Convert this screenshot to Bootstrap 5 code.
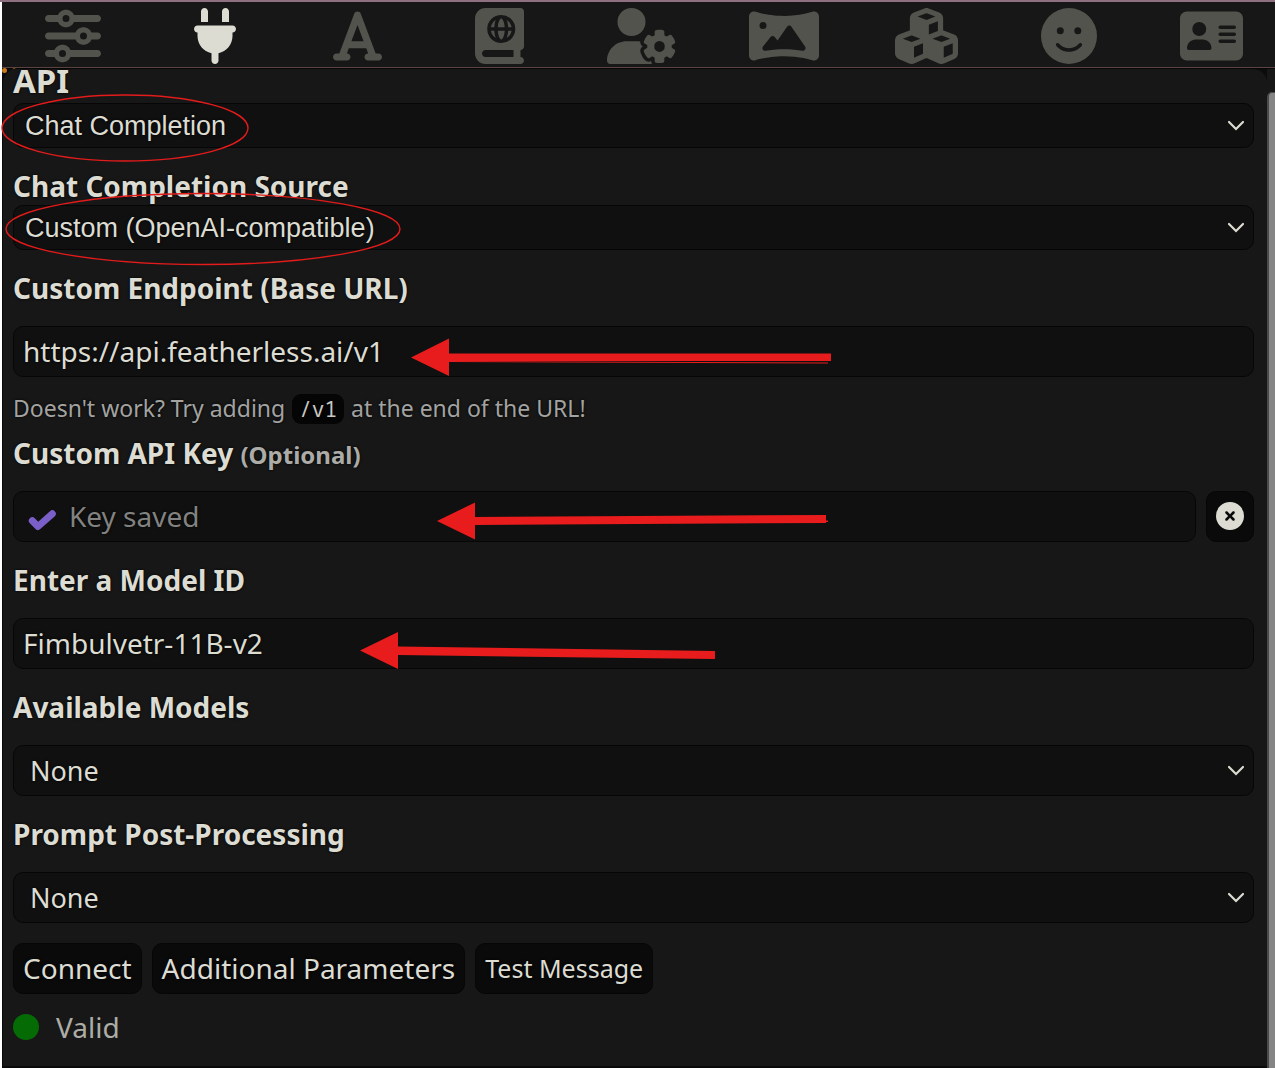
<!DOCTYPE html>
<html lang="en">
<head>
<meta charset="utf-8">
<meta name="viewport" content="width=device-width, initial-scale=1">
<title>API Connections</title>
<link href="https://cdn.jsdelivr.net/npm/bootstrap@5.3.0/dist/css/bootstrap.min.css" rel="stylesheet">
<style>
:root { --ink: #dcdcd2; --panel: #171717; --field: #101010; --line: #060606; }
body { background: #fff; color: var(--ink); font-family: "Noto Sans", sans-serif; font-size: 28px; line-height: 38px; }
.app-shell { min-height: 100vh; padding-left: 2px; }
.top-strip { height: 2px; margin-left: -2px; background: #8f7080; }
.icon-bar { background: var(--panel); padding: 6px 28px 3px 35px; border-bottom: 1px solid #5a4542; }
.icon-bar .btn { width: 72px; height: 56px; padding: 0; border: 0; color: #53534d; }
.icon-bar .btn.active { color: var(--ink); }
.icon-bar svg { height: 56px; width: auto; max-width: none; fill: currentColor; }
.panel-row { background: #0c0c0c; border-top: 1px solid var(--line); }
.api-panel { background: var(--panel); border-left: 1px solid #080808; border-bottom: 3px solid #0a0a0a; border-radius: 14px 14px 0 0; padding: 0 13px 20px 10px; text-shadow: 0 0 3px #000; }
.rail { width: 8px; padding-top: 23px; background: var(--panel); }
.rail-thumb { background: #858585; border-left: 2px solid #4a4a4a; border-top: 1px solid #4a4a4a; border-top-left-radius: 5px; }
.api-title { font-size: 33px; line-height: 24px; font-weight: 700; margin: 0 0 10px; }
.field-label { display: block; font-size: 28px; line-height: 38px; font-weight: 700; margin: 19px 0; }
.field-label.tight { margin-bottom: 0; }
.field-label small { font-size: 24px; line-height: 1; font-weight: 700; color: #ababa8; }
.api-panel .form-control, .api-panel .form-select { height: 51px; line-height: 38px; color: var(--ink); background-color: var(--field); border: 1px solid var(--line); border-radius: 10px; text-shadow: inherit; }
.api-panel .form-control { padding: 0 9px 2px; font-size: 28px; }
.api-panel .form-control::placeholder { color: #828280; opacity: 1; }
.api-panel .form-select { padding: 0 40px 0 16px; font-size: 27px; background-size: 18px 12px; background-position: right 8px center; background-image: url("data:image/svg+xml,%3Csvg xmlns='http://www.w3.org/2000/svg' viewBox='0 0 18 12'%3E%3Cpath d='M2 2l7 7 7-7' fill='none' stroke='%23dcdcd2' stroke-width='2.2' stroke-linecap='round'/%3E%3C/svg%3E"); }
.api-panel .form-select.plain { height: 45px; font-family: "Liberation Sans", sans-serif; padding-left: 11px; }
.hint { font-size: 23px; line-height: 34px; color: #a3a3a1; margin: 14px 0 9px; }
.hint code { display: inline-block; font-family: "Noto Sans Mono", "DejaVu Sans Mono", monospace; font-size: 21px; line-height: 30px; color: #c8c8c2; background: #050505; border-radius: 9px; padding: 0 7px; margin: 0 1px; }
.field-label.after-hint { margin-top: 0; }
.api-panel .form-control.key-input { padding-left: 55px; }
.key-tick { left: 15px; top: 15px; width: 28px; height: 28px; fill: none; stroke: #7b5fc8; stroke-width: 7; stroke-linecap: round; stroke-linejoin: round; }
.btn-dark-box { height: 51px; padding: 0 9px 2px; font-size: 28px; line-height: 38px; color: var(--ink); background: #0a0a0a; border: 1px solid var(--line); border-radius: 10px; text-shadow: inherit; }
.btn-dark-box.slim { font-size: 25px; }
.btn-dark-box.clear-key { width: 48px; }
.clear-key svg { width: 28px; height: 28px; fill: var(--ink); }
.gap-tight { gap: 10px; }
.actions { margin-top: 20px; }
.status { margin-top: 14px; gap: 17px; color: #adada6; text-shadow: none; }
.status-dot { width: 26px; height: 26px; background: #056b05; }
.marks { left: 0; top: 0; width: 860px; height: 700px; pointer-events: none; z-index: 5; }
</style>
</head>
<body>
<div class="app-shell d-flex flex-column position-relative">
  <div class="top-strip"></div>
  <nav class="icon-bar d-flex justify-content-between" aria-label="Main">
    <button class="btn d-flex justify-content-center" type="button" aria-label="Response configuration"><svg viewBox="0 0 512 512"><path d="M0 416c0 17.7 14.3 32 32 32l54.7 0c12.3 28.3 40.5 48 73.3 48s61-19.7 73.3-48L480 448c17.7 0 32-14.3 32-32s-14.3-32-32-32l-246.7 0c-12.3-28.3-40.5-48-73.3-48s-61 19.7-73.3 48L32 384c-17.7 0-32 14.3-32 32zm128 0a32 32 0 1 1 64 0 32 32 0 1 1 -64 0zM320 256a32 32 0 1 1 64 0 32 32 0 1 1 -64 0zm32-80c-32.8 0-61 19.7-73.3 48L32 224c-17.7 0-32 14.3-32 32s14.3 32 32 32l246.7 0c12.3 28.3 40.5 48 73.3 48s61-19.7 73.3-48l54.7 0c17.7 0 32-14.3 32-32s-14.3-32-32-32l-54.7 0c-12.3-28.3-40.5-48-73.3-48zM192 128a32 32 0 1 1 0-64 32 32 0 1 1 0 64zm73.3-64C253 35.7 224.8 16 192 16s-61 19.7-73.3 48L32 64C14.3 64 0 78.3 0 96s14.3 32 32 32l86.7 0c12.3 28.3 40.5 48 73.3 48s61-19.7 73.3-48L480 128c17.7 0 32-14.3 32-32s-14.3-32-32-32L265.3 64z"/></svg></button>
    <button class="btn active bg-transparent d-flex justify-content-center" type="button" aria-label="API connections"><svg viewBox="0 0 384 512"><path d="M96 0C78.3 0 64 14.3 64 32v96h64V32c0-17.7-14.3-32-32-32zM288 0c-17.7 0-32 14.3-32 32v96h64V32c0-17.7-14.3-32-32-32zM32 160c-17.7 0-32 14.3-32 32s14.3 32 32 32v32c0 77.4 55 142 128 156.8V480c0 17.7 14.3 32 32 32s32-14.3 32-32V412.8C297 398 352 333.4 352 256V224c17.7 0 32-14.3 32-32s-14.3-32-32-32H32z"/></svg></button>
    <button class="btn d-flex justify-content-center" type="button" aria-label="Formatting"><svg viewBox="0 0 448 512"><path d="M254 52.8C249.3 40.3 237.3 32 224 32s-25.3 8.3-30 20.8L57.8 416H32c-17.7 0-32 14.3-32 32s14.3 32 32 32h96c17.7 0 32-14.3 32-32s-14.3-32-32-32h-1.8l18-48H303.8l18 48H320c-17.7 0-32 14.3-32 32s14.3 32 32 32h96c17.7 0 32-14.3 32-32s-14.3-32-32-32H390.2L254 52.8zM279.8 304H168.2L224 155.1 279.8 304z"/></svg></button>
    <button class="btn d-flex justify-content-center" type="button" aria-label="World info"><svg viewBox="0 0 448 512"><path d="M0 96C0 43 43 0 96 0H384h32c17.7 0 32 14.3 32 32V352c0 17.7-14.3 32-32 32v64c17.7 0 32 14.3 32 32s-14.3 32-32 32H384 96c-53 0-96-43-96-96V96zM64 416c0 17.7 14.3 32 32 32H352V384H96c-17.7 0-32 14.3-32 32zM247.4 283.8c-3.7 3.7-6.2 4.2-7.4 4.2s-3.7-.5-7.4-4.2c-3.8-3.7-8-10-11.8-18.9c-6.2-14.5-10.8-34.3-12.2-56.9h63c-1.5 22.6-6 42.4-12.2 56.9c-3.8 8.9-8 15.2-11.8 18.9zm42.7-9.9c7.3-18.3 12-41.1 13.4-65.9h31.1c-4.7 27.9-21.4 51.7-44.5 65.9zm0-163.8c23.2 14.2 39.9 38 44.5 65.9H303.5c-1.4-24.7-6.1-47.5-13.4-65.9zM368 192a128 128 0 1 0 -256 0 128 128 0 1 0 256 0zM145.3 208h31.1c1.4 24.7 6.1 47.5 13.4 65.9c-23.2-14.2-39.9-38-44.5-65.9zm31.1-32H145.3c4.7-27.9 21.4-51.7 44.5-65.9c-7.3 18.3-12 41.1-13.4 65.9zm56.1-75.8c3.7-3.7 6.2-4.2 7.4-4.2s3.7 .5 7.4 4.2c3.8 3.7 8 10 11.8 18.9c6.2 14.5 10.8 34.3 12.2 56.9h-63c1.5-22.6 6-42.4 12.2-56.9c3.8-8.9 8-15.2 11.8-18.9z"/></svg></button>
    <button class="btn d-flex justify-content-center" type="button" aria-label="User settings"><svg viewBox="0 0 640 512"><path d="M224 0a128 128 0 1 1 0 256A128 128 0 1 1 224 0zM178.3 304h91.4c11.8 0 23.4 1.2 34.5 3.3c-2.1 18.5 7.4 35.6 21.8 44.8c-16.6 10.6-26.7 31.6-20 53.3c4 12.9 9.4 25.5 16.4 37.6s15.2 23.1 24.4 33c15.7 16.9 39.6 18.4 57.2 8.7v.9c0 9.2 2.7 18.5 7.9 26.3H29.7C13.3 512 0 498.7 0 482.3C0 383.8 79.8 304 178.3 304zM436 218.2c0-7 4.5-13.3 11.3-14.8c10.5-2.4 21.5-3.7 32.7-3.7s22.2 1.3 32.7 3.7c6.8 1.5 11.3 7.8 11.3 14.8v30.6c7.9 3.4 15.4 7.7 22.3 12.8l24.9-14.3c6.1-3.5 13.7-2.7 18.5 2.4c7.6 8.1 14.3 17.2 20.1 27.2s10.3 20.4 13.5 31c2.1 6.7-1.1 13.7-7.2 17.2l-25 14.4c.4 4 .7 8.1 .7 12.3s-.2 8.2-.7 12.3l25 14.4c6.1 3.5 9.2 10.5 7.2 17.2c-3.3 10.6-7.8 21-13.5 31s-12.5 19.1-20.1 27.2c-4.8 5.1-12.5 5.9-18.5 2.4l-24.9-14.3c-6.9 5.1-14.3 9.4-22.3 12.8l0 30.6c0 7-4.5 13.3-11.3 14.8c-10.5 2.4-21.5 3.7-32.7 3.7s-22.2-1.3-32.7-3.7c-6.8-1.5-11.3-7.8-11.3-14.8V454.8c-8-3.4-15.6-7.7-22.5-12.9l-24.7 14.3c-6.1 3.5-13.7 2.7-18.5-2.4c-7.6-8.1-14.3-17.2-20.1-27.2s-10.3-20.4-13.5-31c-2.1-6.7 1.1-13.7 7.2-17.2l24.8-14.3c-.4-4.1-.7-8.2-.7-12.4s.2-8.3 .7-12.4L343.8 325c-6.1-3.5-9.2-10.5-7.2-17.2c3.3-10.6 7.7-21 13.5-31s12.5-19.1 20.1-27.2c4.8-5.1 12.4-5.9 18.5-2.4l24.8 14.3c6.9-5.1 14.5-9.4 22.5-12.9V218.2zm92.1 133.5a48.1 48.1 0 1 0 -96.1 0 48.1 48.1 0 1 0 96.1 0z"/></svg></button>
    <button class="btn d-flex justify-content-center" type="button" aria-label="Backgrounds"><svg viewBox="0 0 640 512"><path d="M45.6 32C20.4 32 0 52.4 0 77.6V434.4C0 459.6 20.4 480 45.6 480c5.1 0 10-.8 14.7-2.4C74.6 472.8 177.6 440 320 440s245.4 32.8 259.6 37.6c4.7 1.6 9.7 2.4 14.7 2.4c25.2 0 45.6-20.4 45.6-45.6V77.6C640 52.4 619.6 32 594.4 32c-5 0-10 .8-14.7 2.4C565.4 39.2 462.4 72 320 72S74.6 39.2 60.4 34.4C55.6 32.8 50.7 32 45.6 32zM96 160a32 32 0 1 1 64 0 32 32 0 1 1 -64 0zm272 0c7.9 0 15.4 3.9 19.8 10.5L512.3 353c5.4 8 5.6 18.4 .4 26.5s-14.7 12.3-24.2 10.7C442.7 382.4 385.2 376 320 376c-65.6 0-123.4 6.5-169.3 14.4c-9.8 1.7-19.7-2.9-24.7-11.5s-4.3-19.4 1.9-27.2L197.3 265c4.6-5.7 11.4-9 18.7-9s14.2 3.3 18.7 9l26.4 33.1 87-127.6c4.5-6.6 11.9-10.5 19.8-10.5z"/></svg></button>
    <button class="btn d-flex justify-content-center" type="button" aria-label="Extensions"><svg viewBox="0 0 576 512"><path d="M290.8 48.6l78.4 29.7L288 109.5 206.8 78.3l78.4-29.7c1.8-.7 3.8-.7 5.7 0zM136 92.5V204.7c-1.3 .4-2.6 .8-3.9 1.3l-96 36.4C14.4 250.6 0 271.5 0 294.7V413.9c0 22.2 13.1 42.3 33.5 51.3l96 42.2c14.4 6.3 30.7 6.3 45.1 0L288 457.5l113.5 49.9c14.4 6.3 30.7 6.3 45.1 0l96-42.2c20.3-8.9 33.5-29.1 33.5-51.3V294.7c0-23.3-14.4-44.1-36.1-52.4l-96-36.4c-1.3-.5-2.6-.9-3.9-1.3V92.5c0-23.3-14.4-44.1-36.1-52.4l-96-36.4c-12.8-4.8-26.9-4.8-39.7 0l-96 36.4C150.4 48.4 136 69.3 136 92.5zM392 210.6l-82.4 31.2V152.6L392 121v89.6zM154.8 250.9l78.4 29.7L152 311.7 70.8 280.6l78.4-29.7c1.8-.7 3.8-.7 5.7 0zm18.8 204.4V354.8L256 323.2v95.9l-82.4 36.2zM421.2 250.9c1.8-.7 3.8-.7 5.7 0l78.4 29.7L424 311.7l-81.2-31.1 78.4-29.7zM523.2 421.2l-77.6 34.1V354.8L528 323.2v90.7c0 3.2-1.9 6-4.8 7.3z"/></svg></button>
    <button class="btn d-flex justify-content-center" type="button" aria-label="Personas"><svg viewBox="0 0 512 512"><path d="M256 512A256 256 0 1 0 256 0a256 256 0 1 0 0 512zM164.1 325.5C182 346.2 212.6 368 256 368s74-21.8 91.9-42.5c5.8-6.7 15.9-7.4 22.6-1.6s7.4 15.9 1.6 22.6C349.8 372.1 311.1 400 256 400s-93.8-27.9-116.1-53.5c-5.8-6.7-5.1-16.8 1.6-22.6s16.8-5.1 22.6 1.6zM144.4 208a32 32 0 1 1 64 0 32 32 0 1 1 -64 0zm192-32a32 32 0 1 1 0 64 32 32 0 1 1 0-64z"/></svg></button>
    <button class="btn d-flex justify-content-center" type="button" aria-label="Characters"><svg viewBox="0 0 576 512"><path d="M64 32C28.7 32 0 60.7 0 96V416c0 35.3 28.7 64 64 64H512c35.3 0 64-28.7 64-64V96c0-35.3-28.7-64-64-64H64zm80 256h64c44.2 0 80 35.8 80 80c0 8.8-7.2 16-16 16H80c-8.8 0-16-7.2-16-16c0-44.2 35.8-80 80-80zm-32-96a64 64 0 1 1 128 0 64 64 0 1 1 -128 0zm256-32H496c8.8 0 16 7.2 16 16s-7.2 16-16 16H368c-8.8 0-16-7.2-16-16s7.2-16 16-16zm0 64H496c8.8 0 16 7.2 16 16s-7.2 16-16 16H368c-8.8 0-16-7.2-16-16s7.2-16 16-16zm0 64H496c8.8 0 16 7.2 16 16s-7.2 16-16 16H368c-8.8 0-16-7.2-16-16s7.2-16 16-16z"/></svg></button>
  </nav>

  <div class="panel-row d-flex flex-grow-1">
    <main class="api-panel flex-grow-1">
      <h1 class="api-title"><label for="api">API</label></h1>
      <select class="form-select plain" id="api"><option>Chat Completion</option></select>

      <label class="field-label tight" for="source">Chat Completion Source</label>
      <select class="form-select plain" id="source"><option>Custom (OpenAI-compatible)</option></select>

      <label class="field-label" for="endpoint">Custom Endpoint (Base URL)</label>
      <input class="form-control" id="endpoint" type="text" value="https://api.featherless.ai/v1">
      <p class="hint">Doesn't work? Try adding <code>/v1</code> at the end of the URL!</p>

      <label class="field-label after-hint" for="key">Custom API Key <small>(Optional)</small></label>
      <div class="d-flex gap-tight">
        <div class="position-relative flex-grow-1">
          <input class="form-control key-input" id="key" type="text" placeholder="Key saved">
          <svg class="key-tick position-absolute" viewBox="0 0 28 28" aria-hidden="true"><path d="M4.300 14.800L10 20.500L24.300 7.800"/></svg>
        </div>
        <button class="btn btn-dark-box clear-key d-flex align-items-center justify-content-center" type="button" aria-label="Clear key"><svg viewBox="0 0 512 512"><path d="M256 512A256 256 0 1 0 256 0a256 256 0 1 0 0 512zM175 175c9.4-9.4 24.6-9.4 33.9 0l47 47 47-47c9.4-9.4 24.6-9.4 33.9 0s9.4 24.6 0 33.9l-47 47 47 47c9.4 9.4 9.4 24.6 0 33.9s-24.6 9.4-33.9 0l-47-47-47 47c-9.4 9.4-24.6 9.4-33.9 0s-9.4-24.6 0-33.9l47-47-47-47c-9.4-9.4-9.4-24.6 0-33.9z"/></svg></button>
      </div>

      <label class="field-label" for="model">Enter a Model ID</label>
      <input class="form-control" id="model" type="text" value="Fimbulvetr-11B-v2">

      <label class="field-label" for="models">Available Models</label>
      <select class="form-select" id="models"><option>None</option></select>

      <label class="field-label" for="post">Prompt Post-Processing</label>
      <select class="form-select" id="post"><option>None</option></select>

      <div class="actions d-flex flex-wrap gap-tight">
        <button class="btn btn-dark-box" type="button">Connect</button>
        <button class="btn btn-dark-box" type="button">Additional Parameters</button>
        <button class="btn btn-dark-box slim" type="button">Test Message</button>
      </div>
      <div class="status d-flex align-items-center" role="status"><span class="status-dot rounded-circle"></span><span>Valid</span></div>
    </main>
    <div class="rail d-flex flex-column" aria-hidden="true"><div class="rail-thumb flex-grow-1"></div></div>
  </div>

  <!-- Hand-drawn callouts over the form -->
  <svg class="marks position-absolute" viewBox="0 0 860 700" aria-hidden="true">
    <g fill="#c87a1c">
      <circle cx="4.500" cy="70.500" r="2.500"/>
      <path d="M12 69.500l2-1.500h2z"/>
    </g>
    <g fill="none" stroke="#e31b1b" stroke-width="1.4">
      <ellipse cx="125" cy="128" rx="123" ry="33"/>
      <ellipse cx="203" cy="229" rx="197" ry="35.5"/>
    </g>
    <g fill="#e81c1c">
      <path d="M411 357.5L449 338.500V353.500H831V361H449V376z"/>
      <path d="M449 361L828 362.500V363.500L449 362z"/>
      <path d="M437 521L475 502.500V517L826 515V520.500H828V522H826V523L475 525V539.500z"/>
      <path d="M360 650.500L398 632V646.500L715 651V659L398 655V669z"/>
    </g>
  </svg>
</div>
<script src="https://cdn.jsdelivr.net/npm/bootstrap@5.3.0/dist/js/bootstrap.bundle.min.js"></script>
</body>
</html>
